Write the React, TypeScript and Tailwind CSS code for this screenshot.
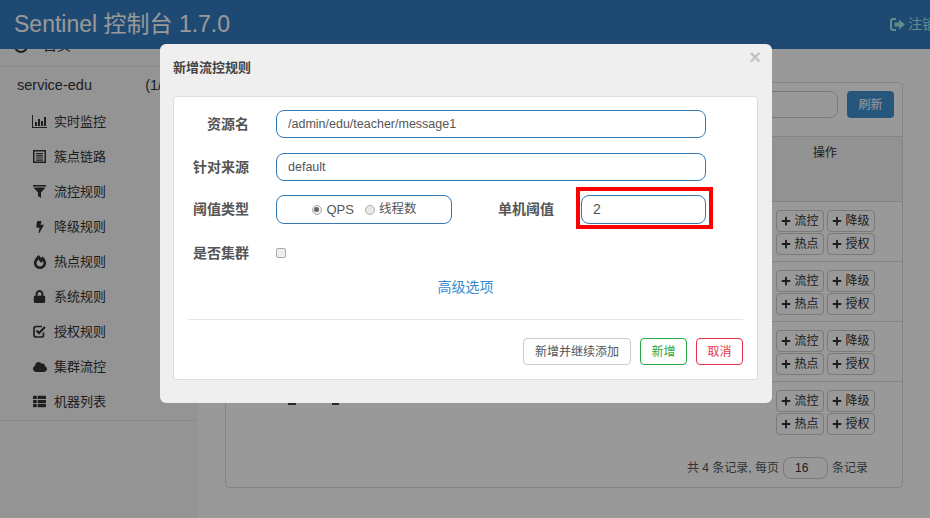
import React from "react";
import { FaBolt, FaFireAlt, FaLock, FaCloud, FaPlus, FaThList } from "react-icons/fa";

const font = { fontFamily: '"Liberation Sans", "Noto Sans CJK SC", sans-serif' };

const Stats = () => (
  <svg width="15" height="13" viewBox="0 0 15 13" fill="currentColor">
    <path d="M0 0h1v12h14v1H0z" />
    <path d="M3 7h2v4H3zM6 4h2v7H6zM9 6h2v5H9zM12 2h2v9h-2z" />
  </svg>
);
const ListAlt = () => (
  <svg width="13" height="13" viewBox="0 0 13 13" fill="currentColor">
    <path fillRule="evenodd" d="M0 0h13v13H0zM1.5 1.5v10h10v-10z" />
    <path d="M3 3h7v1.2H3zM3 5.2h7v1.2H3zM3 7.4h7v1.2H3zM3 9.6h7v1.2H3z" />
  </svg>
);
const Filter = () => (
  <svg width="13" height="13" viewBox="0 0 13 13" fill="currentColor">
    <path d="M0 0h13v1.6H0zM.5 2.6h12L8 7.5V13L5 11V7.5z" />
  </svg>
);
const CheckBox = () => (
  <svg width="13" height="13" viewBox="0 0 13 13" fill="none" stroke="currentColor">
    <path strokeWidth="1.7" d="M10.5 7.5V10a2 2 0 0 1-2 2H3a2 2 0 0 1-2-2V3.5a2 2 0 0 1 2-2h6" />
    <path strokeWidth="2.2" d="M3.5 5.5l2.5 2.5 6-6" />
  </svg>
);
const LogOut = () => (
  <svg className="shrink-0" width="15" height="13" viewBox="0 0 15 13" fill="currentColor">
    <path d="M6 0H3a3 3 0 0 0-3 3v7a3 3 0 0 0 3 3h3v-2H3a1 1 0 0 1-1-1V3a1 1 0 0 1 1-1h3z" />
    <path d="M4.5 4.5H9V1.5l6 5-6 5v-3H4.5z" />
  </svg>
);
const Home = () => (
  <svg width="14" height="14" viewBox="0 0 14 14" fill="none" stroke="currentColor" strokeWidth="2">
    <circle cx="7" cy="7" r="6" />
  </svg>
);

const menu: [React.ReactNode, string][] = [
  [<Stats />, "实时监控"],
  [<ListAlt />, "簇点链路"],
  [<Filter />, "流控规则"],
  [<FaBolt size={12} />, "降级规则"],
  [<FaFireAlt size={14} />, "热点规则"],
  [<FaLock size={13} />, "系统规则"],
  [<CheckBox />, "授权规则"],
  [<FaCloud size={14} />, "集群流控"],
  [<FaThList size={13} />, "机器列表"],
];

const Act = ({ label }: { label: string }) => (
  <span className="flex h-[22px] w-[48px] items-center justify-center gap-[3px] rounded-[4px] border border-[#cccccc] text-[12px] text-[#333333]">
    <FaPlus size={10} />
    {label}
  </span>
);

const Row = ({ marks, last }: { marks?: boolean; last?: boolean }) => (
  <div className={`flex h-[60px] ${last ? "" : "border-b border-[#dddddd]"}`}>
    <div className="flex flex-1 items-start gap-[36px] pl-[62px] pt-[20px]">
      {marks && (
        <>
          <span className="h-[3px] w-[8px] bg-[#444444]" />
          <span className="h-[3px] w-[7px] bg-[#444444]" />
        </>
      )}
    </div>
    <div className="mr-[27px] grid grid-cols-[48px_48px] content-start gap-x-[3px] gap-y-px pt-[8px]">
      <Act label="流控" />
      <Act label="降级" />
      <Act label="热点" />
      <Act label="授权" />
    </div>
  </div>
);

const Label = ({ children }: { children: React.ReactNode }) => (
  <label className="w-[75px] shrink-0 text-right text-[14px] font-bold text-[#555555]">{children}</label>
);

const fieldClass =
  "flex items-center rounded-[8px] border border-[#337ab7] bg-white px-[11px] text-[12.5px] text-[#555555]";

export default function App() {
  return (
    <div style={font} className="relative h-[518px] w-[930px] overflow-hidden bg-white text-[#333333]">
      {/* page */}
      <header className="flex h-[49px] items-center justify-between bg-[#327bbf] pl-[14px]">
        <span className="text-[23px] whitespace-nowrap text-white">Sentinel 控制台 1.7.0</span>
        <span className="flex w-[40px] items-center gap-[3px] overflow-hidden text-[14px] whitespace-nowrap text-[#a5e5e5]">
          <LogOut />
          <span className="shrink-0">注销</span>
        </span>
      </header>
      <div className="flex h-[469px]">
        <aside className="h-full w-[198px] shrink-0 bg-[#f7f7f7]">
          <div className="w-full border-b border-[#e7e7e7]">
            <div className="h-[17px] overflow-hidden">
              <div className="-mt-[14px] flex items-center gap-[15px] pl-[14px] text-[14px]">
                <Home />
                <span>首页</span>
              </div>
            </div>
          </div>
          <div className="border-b border-[#e7e7e7] pb-px">
            <div className="flex h-[37px] items-center justify-between pr-[23px] pl-[17px] text-[14.5px] whitespace-nowrap">
              <span>service-edu</span>
              <span>(1/1)</span>
            </div>
            {menu.map(([icon, text]) => (
              <div key={text} className="flex h-[35px] items-center text-[13px]">
                <span className="flex w-[53px] justify-center pl-[26px] text-[#333333]">{icon}</span>
                <span className="ml-px">{text}</span>
              </div>
            ))}
          </div>
        </aside>
        <main className="flex-1 pt-[33px] pr-[27px] pl-[27px]">
          <div className="h-[406px] rounded-[4px] border border-[#dddddd]">
            <div className="flex h-[53px] items-start justify-end gap-[9px] pt-[8px] pr-[8px]">
              <span className="h-[27px] w-[200px] rounded-[8px] border border-[#cccccc]" />
              <span className="flex h-[27px] w-[47px] items-center justify-center rounded-[4px] bg-[#4290d0] text-[12px] text-white">
                刷新
              </span>
            </div>
            <div className="flex h-[66px] justify-end border-y border-[#dddddd] bg-[#f4f4f4] pt-[7px] pr-[65px] text-[12px]">
              操作
            </div>
            <Row />
            <Row />
            <Row />
            <Row marks last />
            <div className="flex items-center justify-end gap-[4px] pt-[15px] pr-[34px] text-[12px] text-[#555555]">
              <span>共 4 条记录, 每页</span>
              <span className="flex h-[22px] w-[45px] items-center rounded-[8px] border border-[#cccccc] pl-[11px] text-[#333333]">
                16
              </span>
              <span>条记录</span>
            </div>
          </div>
        </main>
      </div>

      {/* backdrop */}
      <div className="absolute top-[0px] left-[0px] h-[518px] w-[930px] bg-[rgba(0,0,0,0.4)]" />

      {/* modal */}
      <div className="absolute top-[44px] left-[160px] h-[359px] w-[612px] rounded-[6px] bg-[#efefef]">
        <div className="relative h-[52px] pt-[14px] pl-[13px] text-[13px] font-bold text-[#444444]">
          新增流控规则
          <span className="absolute top-[2px] right-[11px] text-[20px] leading-[22px] font-bold text-[#c4c4c4]">×</span>
        </div>
        <div className="ml-[13px] h-[284px] w-[585px] rounded-[4px] border border-[#dddddd] bg-white pt-[13px]">
          <div className="flex items-center gap-[27px]">
            <Label>资源名</Label>
            <div className={`${fieldClass} h-[28px] w-[430px]`}>/admin/edu/teacher/message1</div>
          </div>
          <div className="mt-[15px] flex items-center gap-[27px]">
            <Label>针对来源</Label>
            <div className={`${fieldClass} h-[28px] w-[430px]`}>default</div>
          </div>
          <div className="mt-[14px] flex items-center gap-[27px]">
            <Label>阈值类型</Label>
            <div className="flex h-[29px] w-[176px] items-center justify-center rounded-[8px] border border-[#337ab7] text-[12.5px] text-[#555555]">
              <span className="mr-[5px] flex h-[10px] w-[10px] items-center justify-center rounded-full border border-[#aaaaaa] bg-[#eeeeee]">
                <span className="h-[5px] w-[5px] rounded-full bg-[#666666]" />
              </span>
              <span className="mr-[11px] text-[13px]">QPS</span>
              <span className="mr-[4px] h-[10px] w-[10px] rounded-full border border-[#aaaaaa] bg-[#e8e8e8]" />
              <span>线程数</span>
            </div>
            <Label>单机阈值</Label>
            <div className="relative">
              <div className={`${fieldClass} h-[29px] w-[125px] !text-[14px]`}>2</div>
              <span className="absolute -top-[8px] -right-[7px] -bottom-[5px] -left-[5px] border-[4px] border-[#ff0000]" />
            </div>
          </div>
          <div className="mt-[14px] flex h-[30px] items-center gap-[27px]">
            <Label>是否集群</Label>
            <span className="h-[10px] w-[10px] rounded-[2px] border border-[#aaaaaa] bg-[#eeeeee]" />
          </div>
          <div className="mt-[9px] text-center text-[14px] leading-[20px] text-[#3a8bcd]">高级选项</div>
          <div className="mx-[14px] mt-[22px] border-t border-[#e5e5e5]" />
          <div className="mt-[18px] flex justify-end gap-[9px] pr-[14px] text-[12px]">
            <span className="flex h-[27px] w-[108px] items-center justify-center rounded-[4px] border border-[#cccccc] text-[#555555]">
              新增并继续添加
            </span>
            <span className="flex h-[27px] w-[47px] items-center justify-center rounded-[4px] border border-[#28a745] text-[#28a745]">
              新增
            </span>
            <span className="flex h-[27px] w-[47px] items-center justify-center rounded-[4px] border border-[#e8334a] text-[#e8334a]">
              取消
            </span>
          </div>
        </div>
      </div>
    </div>
  );
}
